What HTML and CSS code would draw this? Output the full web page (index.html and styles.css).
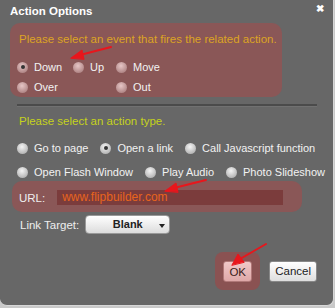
FILE: index.html
```
<!DOCTYPE html>
<html lang="en">
<head>
  <meta charset="UTF-8" />
  <title>Action Options</title>
  <link rel="stylesheet" href="styles.css">
</head>
<body>

<div class="dialog">
  <div class="titlebar">
    <span class="title">Action Options</span>
    <span class="close">&#10006;</span>
  </div>

  <!-- Event -->
  <div class="hint-box events">
    <p class="note note-event">Please select an event that fires the related action.</p>
    <div class="event-grid">
      <label class="opt"><span class="radio pink checked"></span>Down</label>
      <label class="opt"><span class="radio pink"></span>Up</label>
      <label class="opt"><span class="radio pink"></span>Move</label>
      <label class="opt"><span class="radio pink"></span>Over</label>
      <span></span>
      <label class="opt"><span class="radio pink"></span>Out</label>
    </div>
  </div>

  <hr class="sep">

  <!-- Action type -->
  <p class="note note-action">Please select an action type.</p>
  <div class="opt-row first">
    <label class="opt"><span class="radio"></span>Go to page</label>
    <label class="opt"><span class="radio checked"></span>Open a link</label>
    <label class="opt"><span class="radio"></span>Call Javascript function</label>
  </div>
  <div class="opt-row">
    <label class="opt"><span class="radio"></span>Open Flash Window</label>
    <label class="opt"><span class="radio"></span>Play Audio</label>
    <label class="opt"><span class="radio"></span>Photo Slideshow</label>
  </div>

  <div class="hint-box url-row">
    <span class="lbl">URL:</span>
    <div class="url-input">www.flipbuilder.com</div>
  </div>

  <div class="target-row">
    <span class="lbl">Link Target:</span>
    <div class="select">Blank<span class="caret"></span></div>
  </div>

  <div class="buttons">
    <div class="ok-glow"><button class="btn ok">OK</button></div>
    <button class="btn">Cancel</button>
  </div>

  <svg class="arrows" width="333" height="305" viewBox="0 0 333 305">
    <g stroke="#e8161c" stroke-width="2" stroke-linecap="round" fill="#e8161c">
      <line x1="111" y1="47" x2="80" y2="55"/>
      <polygon points="71,58 82,50 84,59" stroke-width="1"/>
      <line x1="206" y1="180" x2="174" y2="188"/>
      <polygon points="165,191 176,183 178,192" stroke-width="1"/>
      <line x1="266" y1="244" x2="240" y2="259"/>
      <polygon points="232,265 238,254 244,262" stroke-width="1"/>
    </g>
  </svg>
</div>

</body>
</html>
```

FILE: styles.css
```
* {
  box-sizing: border-box;
  font-family: 'Liberation Sans', Arial, sans-serif;
}

body {
  margin: 0;
  background: #c9c9c9;
}

.dialog {
  position: relative;
  width: 334px;
  height: 306px;
  background: #676767;
  border-right: 1px solid #d8d8d8;
  border-bottom: 1px solid #d8d8d8;
  border-radius: 0 0 7px 7px;
  color: #f2f2f2;
  font-size: 11px;
}

.titlebar {
  display: flex;
  justify-content: space-between;
  align-items: center;
  height: 20px;
  padding: 1px 9px 0 10px;
}

.title {
  font-weight: bold;
  font-size: 11.5px;
  color: #fff;
}

.close {
  font-size: 10px;
  font-weight: bold;
  color: #fff;
  margin-top: -4px;
}

.hint-box {
  background: #8a5757;
  border-radius: 10px;
}

.events {
  width: 272px;
  height: 74px;
  margin: 3px 0 0 10px;
  padding: 9px 0 0 7px;
}

.note {
  margin: 0;
  line-height: 14px;
  font-size: 11.5px;
}

.note-event {
  color: #dca424;
  padding-left: 2px;
}

.event-grid {
  display: grid;
  grid-template-columns: 56px 43px auto;
  row-gap: 6px;
  margin-top: 14px;
}

.opt {
  display: flex;
  align-items: center;
  gap: 6px;
  height: 14px;
  white-space: nowrap;
}

.radio {
  width: 11px;
  height: 11px;
  border-radius: 50%;
  background: radial-gradient(circle at 45% 35%, #f4f4f4, #b9b9b9 70%, #9a9a9a);
  display: flex;
  align-items: center;
  justify-content: center;
  flex: none;
}

.radio.pink {
  background: radial-gradient(circle at 45% 35%, #e6c6c6, #b48a8a 70%, #9a7070);
}

.radio.checked::after {
  content: "";
  width: 4px;
  height: 4px;
  border-radius: 50%;
  background: #333;
}

.sep {
  width: 300px;
  margin: 7px 0 0 17px;
  border: none;
  border-top: 2px solid #4b4b4b;
  border-bottom: 1px solid #717171;
}

.note-action {
  color: #c5d21c;
  margin: 7px 0 0 19px;
}

.opt-row {
  display: flex;
  gap: 12px;
  padding-left: 17px;
  margin-top: 10px;
}

.opt-row.first {
  margin-top: 13px;
}

.url-row {
  display: flex;
  align-items: center;
  width: 290px;
  height: 31px;
  margin: 2px 0 0 12px;
  padding: 2px 0 0 7px;
}

.lbl {
  color: #eee;
  font-size: 11.5px;
}

.url-input {
  width: 226px;
  height: 15px;
  margin-left: 12px;
  padding-left: 5px;
  background: #7b3c3c;
  color: #e8641c;
  font-size: 12px;
  line-height: 15px;
}

.target-row {
  display: flex;
  align-items: center;
  gap: 6px;
  padding-left: 20px;
  margin-top: 3px;
}

.select {
  position: relative;
  width: 85px;
  height: 19px;
  border-radius: 4px;
  background: linear-gradient(#ffffff, #dcdcdc);
  border: 1px solid #999;
  color: #222;
  font-weight: bold;
  font-size: 11px;
  text-align: center;
  line-height: 17px;
}

.caret {
  position: absolute;
  right: 4px;
  top: 8px;
  border-left: 3px solid transparent;
  border-right: 3px solid transparent;
  border-top: 4px solid #222;
}

.buttons {
  display: flex;
  justify-content: flex-end;
  align-items: center;
  gap: 9px;
  padding-right: 16px;
  margin-top: 18px;
}

.ok-glow {
  padding: 9px 8px 8px 8px;
  background: #8a5252;
  border-radius: 8px;
}

.btn {
  height: 21px;
  padding: 0 5px;
  border: 1px solid #888;
  border-radius: 3px;
  background: linear-gradient(#ffffff, #dedede);
  color: #222;
  font-size: 11.5px;
}

.btn.ok {
  width: 29px;
  background: linear-gradient(#f0c8c8, #dfa8a8);
  border-color: #b07878;
  color: #3a1a1a;
  padding: 0;
}

.arrows {
  position: absolute;
  left: 0;
  top: 0;
}
```
